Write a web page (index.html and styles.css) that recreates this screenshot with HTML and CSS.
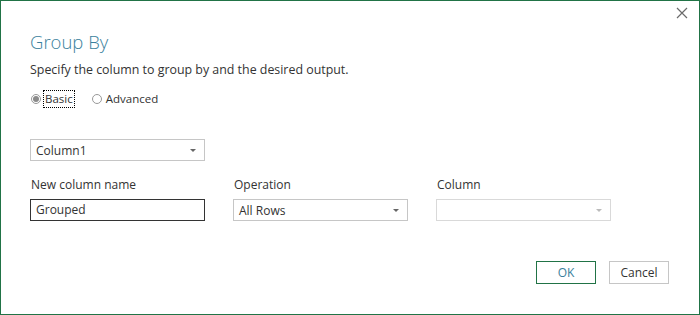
FILE: index.html
```html
<!DOCTYPE html>
<html>
<head>
<meta charset="utf-8">
<link rel="stylesheet" href="styles.css">
</head>
<body>
<div class="dialog">
  <button class="close" aria-label="Close">
    <svg width="12" height="12" viewBox="0 0 12 12"><path d="M1 1L11 11M11 1L1 11" stroke="#6b6b6b" stroke-width="1.2" fill="none"/></svg>
  </button>
  <h1 class="title">Group By</h1>
  <p class="subtitle">Specify the column to group by and the desired output.</p>
  <div class="radios">
    <label class="radio"><span class="dot checked"></span><span class="rlabel focus">Basic</span></label>
    <label class="radio"><span class="dot"></span><span class="rlabel">Advanced</span></label>
  </div>
  <div class="select groupcol"><span>Column1</span><span class="arrow"></span></div>
  <div class="fields">
    <div class="field">
      <div class="flabel">New column name</div>
      <div class="input">Grouped</div>
    </div>
    <div class="field">
      <div class="flabel">Operation</div>
      <div class="select"><span>All Rows</span><span class="arrow"></span></div>
    </div>
    <div class="field">
      <div class="flabel">Column</div>
      <div class="select disabled"><span></span><span class="arrow"></span></div>
    </div>
  </div>
  <div class="buttons">
    <button class="btn ok">OK</button>
    <button class="btn">Cancel</button>
  </div>
</div>
</body>
</html>
```
FILE: styles.css
```css
* { box-sizing: border-box; }
html, body { margin: 0; padding: 0; background: #fff; }
body { font-family: "Open Sans", "Noto Sans", sans-serif; color: #333; }
.dialog {
  position: relative;
  width: 700px;
  height: 315px;
  border: 1px solid #217346;
  padding: 0 0 0 29px;
  display: flex;
  flex-direction: column;
}
.close {
  position: absolute;
  top: 6px;
  right: 11px;
  width: 12px;
  height: 12px;
  padding: 0;
  border: 0;
  background: none;
  display: flex;
}
.title {
  margin: 27px 0 0 0;
  font-size: 18.5px;
  font-weight: 300;
  line-height: 28px;
  color: #3a7f9c;
}
.subtitle {
  margin: 5px 0 0 0;
  font-size: 12.4px;
  line-height: 18px;
  color: #333;
}
.radios {
  display: flex;
  gap: 17px;
  margin-top: 11px;
  height: 18px;
  align-items: center;
}
.radio { display: flex; align-items: center; font-size: 11.5px; color: #333; }
.dot {
  width: 10px; height: 10px;
  border: 1px solid #999;
  border-radius: 50%;
  margin: 0 3px 0 1px;
  display: flex; align-items: center; justify-content: center;
}
.dot.checked::after {
  content: "";
  width: 6px; height: 6px;
  border-radius: 50%;
  background: #8a8a8a;
}
.rlabel { padding: 0 1px; line-height: 16px; }
.rlabel.focus { outline: 1px dotted #000; outline-offset: 0; }
.select {
  width: 175px;
  height: 22px;
  border: 1px solid #c6c6c6;
  display: flex;
  align-items: center;
  justify-content: space-between;
  padding: 0 8px 0 5px;
  font-size: 12px;
  color: #333;
}
.groupcol { margin-top: 31px; }
.arrow {
  width: 0; height: 0;
  border-left: 3px solid transparent;
  border-right: 3px solid transparent;
  border-top: 3px solid #666;
}
.select.disabled { border-color: #d9d9d9; }
.select.disabled .arrow { border-top-color: #bbb; }
.fields {
  display: flex;
  gap: 28px;
  margin-top: 15px;
}
.field { width: 175px; display: flex; flex-direction: column; }
.flabel { font-size: 12px; line-height: 18px; height: 20px; color: #333; padding-left: 1px; }
.input {
  margin-top: 3px;
  width: 175px;
  height: 22px;
  border: 1px solid #333;
  padding: 0 5px;
  font-size: 12px;
  line-height: 20px;
}
.field .select { margin-top: 3px; }
.buttons {
  display: flex;
  justify-content: flex-end;
  gap: 13px;
  margin-top: 40px;
  padding-right: 30px;
}
.btn {
  width: 60px;
  height: 23px;
  border: 1px solid #c6c6c6;
  background: #fff;
  font-family: inherit;
  font-size: 12px;
  color: #333;
  padding: 0;
}
.btn.ok { border-color: #217346; color: #3a7f9c; }
```
